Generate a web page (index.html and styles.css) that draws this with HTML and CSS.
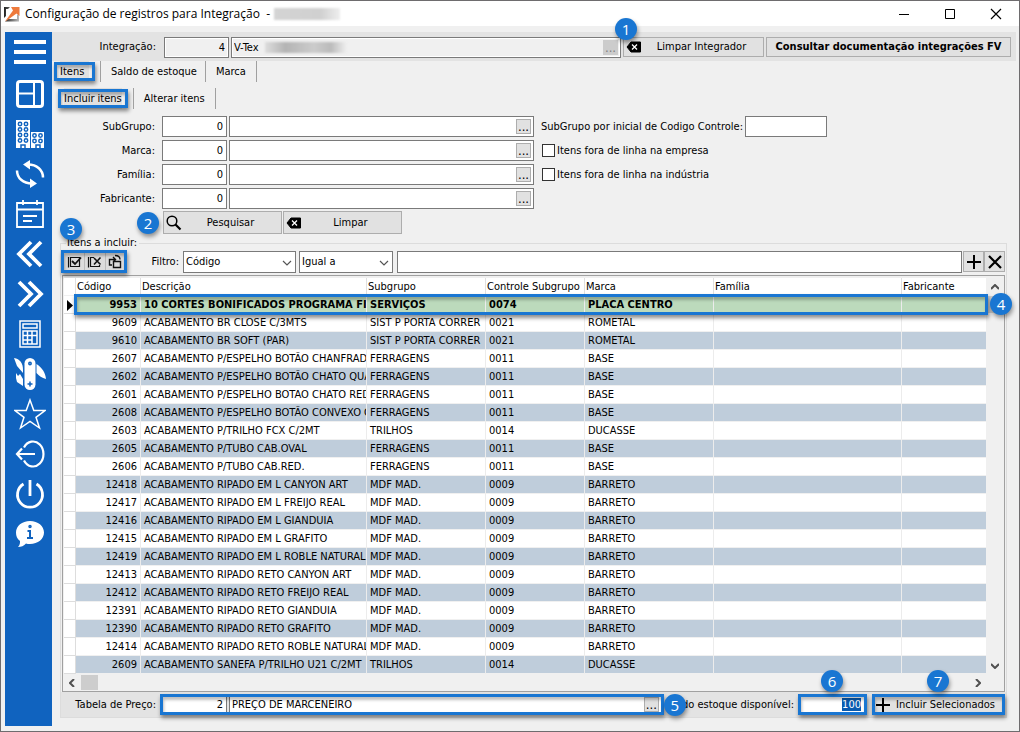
FILE: index.html
```html
<!DOCTYPE html>
<html lang="pt-BR">
<head>
<meta charset="utf-8">
<title>Configuração de registros para Integração</title>
<link rel="stylesheet" href="styles.css">
</head>
<body>
<div class="window">
  <header class="titlebar">
    <svg class="app-icon" width="16" height="16" viewBox="0 0 16 16"><defs><linearGradient id="g" x1="0" x2="1"><stop offset="0" stop-color="#222"/><stop offset="1" stop-color="#bbb"/></linearGradient></defs><path d="M0 1h6L4 3H2v7l-2 2zM1 15.500L4 13h9V9l2-2v8.500z" fill="url(#g)"/><path d="M7 1h8.500v9l-3-2.500-9 6.500-2.500 1.500L9 4.500z" fill="#ee7a3c"/></svg>
    <h1 class="title">Configuração de registros para Integração &nbsp;-</h1>
    <span class="smudge"></span>
    <div class="win-buttons">
      <button type="button" aria-label="Minimizar"><svg width="12" height="12"><path d="M1 6.500h10" stroke="#000"/></svg></button>
      <button type="button" aria-label="Maximizar"><svg width="12" height="12"><path d="M1.500 1.500h9v9h-9z" fill="none" stroke="#000"/></svg></button>
      <button type="button" aria-label="Fechar"><svg width="12" height="12"><path d="M1 1l10 10M11 1L1 11" stroke="#000" stroke-width="1.200"/></svg></button>
    </div>
  </header>
  <div class="body">
    <nav class="sidebar">
      <button type="button" aria-label="Menu"><svg viewBox="0 0 32 32"><path d="M0 4h32M0 14h32M0 24h32" stroke-width="4"/></svg></button>
      <button type="button" aria-label="Painel"><svg viewBox="0 0 32 32"><rect x="3.500" y="3.500" width="25" height="25" rx="2.500" stroke-width="3"/><path d="M20 5v22M4 15.500h16" stroke-width="2"/></svg></button>
      <button type="button" aria-label="Empresas"><svg viewBox="0 0 32 32"><path class="solid" d="M2 2h14v28H2zM17 14h13v16H17z"/><g class="cut"><circle cx="6" cy="6" r="1.700"/><circle cx="12" cy="6" r="1.700"/><circle cx="6" cy="11.500" r="1.700"/><circle cx="12" cy="11.500" r="1.700"/><circle cx="6" cy="17" r="1.700"/><circle cx="12" cy="17" r="1.700"/><circle cx="6" cy="22.500" r="1.700"/><circle cx="12" cy="22.500" r="1.700"/><circle cx="20.500" cy="17.500" r="1.700"/><circle cx="26.500" cy="17.500" r="1.700"/><circle cx="20.500" cy="23" r="1.700"/><circle cx="26.500" cy="23" r="1.700"/><path d="M7 30v-3h4v3M22 30v-3h4v3"/></g></svg></button>
      <button type="button" aria-label="Atualizar"><svg viewBox="0 0 32 32"><path d="M29 19.500C29 12 23 6.500 14 6.500M3 12.500C3 20 9 25.500 18 25.500" stroke-width="2.500"/><path class="solid" d="M16 2v9.500L9 6.500zM16 20.500V30l7-4.500z"/></svg></button>
      <button type="button" aria-label="Agenda"><svg viewBox="0 0 32 32"><path d="M3 5h26v24H3zM3 11.500h26M9 2v5M23 2v5M9 18h14M9 23h9" stroke-width="1.800"/></svg></button>
      <button type="button" aria-label="Anterior"><svg viewBox="0 0 32 32"><path d="M17 4L5 16l12 12M27 4L15 16l12 12" stroke-width="3.800"/></svg></button>
      <button type="button" aria-label="Próximo"><svg viewBox="0 0 32 32"><path d="M5 4l12 12L5 28M15 4l12 12-12 12" stroke-width="3.800"/></svg></button>
      <button type="button" aria-label="Calculadora"><svg viewBox="0 0 32 32"><path d="M6 3h20v26H6zM9 6h14v4H9zM9 13h14v13H9zM13.500 13v13M18 13v13M9 17.500h14M9 22h9" stroke-width="1.500"/></svg></button>
      <button type="button" aria-label="Ferramentas"><svg viewBox="0 0 32 32"><rect class="solid" x="10.500" y="0" width="11" height="32" rx="5.500"/><path class="solid" d="M0 0c6 1 9 5 9 12v3L3 8zM22.500 6c6 4 9 9 9.500 15-4-1-7-3-9.500-6zM2 15l2 3 2-2 3 5v7l-6-4-1-4z"/><g class="cut"><circle cx="16" cy="5.500" r="1.200"/><path d="M16 23.500v5M13.500 26h5"/></g></svg></button>
      <button type="button" aria-label="Favoritos"><svg viewBox="0 0 32 32"><path d="M16 2l3.800 10.500H31l-9 6.800L25.500 30 16 23.500 6.500 30 10 19.300 1 12.500h11.200z" stroke-width="1.500"/></svg></button>
      <button type="button" aria-label="Sair"><svg viewBox="0 0 32 32"><path d="M10 9.500A10.500 12.500 0 1 1 10 22.500M3 16h18M8 10.500L3 16l5 5.500" stroke-width="2.200"/></svg></button>
      <button type="button" aria-label="Desligar"><svg viewBox="0 0 32 32"><path d="M9.500 6A12.500 12.500 0 1 0 22.500 6M16 2v16" stroke-width="2.800"/></svg></button>
      <button type="button" aria-label="Informações"><svg viewBox="0 0 32 32"><path class="solid" d="M16 3c8 0 14 5 14 11.500S24 26 16 26c-1.500 0-3 0-4-.5C10 28 7 29 4 29c2-2 2-4 2-6-3-2-4-5-4-8.500C2 8 8 3 16 3z"/><g class="cut"><circle cx="16" cy="8.500" r="1"/><path d="M13.500 13h2.500v7m-3 0h6" stroke-width="2"/></g></svg></button>
    </nav>
    <main class="main">
      <div class="toolbar">
        <label for="integ" class="lbl-top">Integração:</label>
        <input id="integ" class="field num readonly" value="4" readonly>
        <div class="lookup grow"><input class="field readonly" aria-label="Nome da integração" value="V-Tex" readonly><span class="smudge-field"></span><button type="button" class="dots off" aria-label="Buscar integração">...</button></div>
        <button type="button" class="btn btn-int"><svg class="bi" width="16" height="12" viewBox="0 0 16 12"><path d="M5 1h9.500v10H5L1 6z" stroke="#000" stroke-linejoin="round"/><path d="M6 3.500l5 5M11 3.500l-5 5" stroke="#fff" stroke-width="1.300"/></svg><span class="bt">Limpar Integrador</span><span class="badge b1">1</span></button>
        <button type="button" class="btn btn-doc">Consultar documentação integrações FV</button>
      </div>
      <div class="tabs" role="tablist">
        <button type="button" role="tab" aria-selected="true" class="tab active">Itens<i class="frame"></i></button>
        <button type="button" role="tab" class="tab">Saldo de estoque</button>
        <button type="button" role="tab" class="tab">Marca</button>
      </div>
      <div class="tabs sub" role="tablist">
        <button type="button" role="tab" aria-selected="true" class="tab active">Incluir itens<i class="frame"></i></button>
        <button type="button" role="tab" class="tab">Alterar itens</button>
      </div>
      <div class="filters">
        <div class="col">
          <div class="row"><label for="sg">SubGrupo:</label><input id="sg" class="field num" value="0"><div class="lookup"><input class="field" aria-label="Nome do subgrupo"><button type="button" class="dots">...</button></div></div>
          <div class="row"><label for="mc">Marca:</label><input id="mc" class="field num" value="0"><div class="lookup"><input class="field" aria-label="Nome da marca"><button type="button" class="dots">...</button></div></div>
          <div class="row"><label for="fm">Família:</label><input id="fm" class="field num" value="0"><div class="lookup"><input class="field" aria-label="Nome da família"><button type="button" class="dots">...</button></div></div>
          <div class="row"><label for="fb">Fabricante:</label><input id="fb" class="field num" value="0"><div class="lookup"><input class="field" aria-label="Nome do fabricante"><button type="button" class="dots">...</button></div></div>
          <div class="actions">
            <button type="button" class="btn"><svg class="bi" width="16" height="16" viewBox="0 0 16 16"><circle cx="6" cy="6" r="4.800" fill="none" stroke="#000" stroke-width="1.500"/><path d="M9.500 9.500L14.500 14.500" stroke="#000" stroke-width="2.200"/></svg><span class="bt">Pesquisar</span><span class="badge b2">2</span></button>
            <button type="button" class="btn"><svg class="bi" width="16" height="12" viewBox="0 0 16 12"><path d="M5 1h9.500v10H5L1 6z" stroke="#000" stroke-linejoin="round"/><path d="M6 3.500l5 5M11 3.500l-5 5" stroke="#fff" stroke-width="1.300"/></svg><span class="bt">Limpar</span></button>
          </div>
        </div>
        <div class="col">
          <div class="row"><label for="ini" class="plain">SubGrupo por inicial de Codigo Controle:</label><input id="ini" class="field ini"></div>
          <div class="row check"><input type="checkbox" id="c1"><label for="c1" class="plain">Itens fora de linha na empresa</label></div>
          <div class="row check"><input type="checkbox" id="c2"><label for="c2" class="plain">Itens fora de linha na indústria</label></div>
        </div>
      </div>
      <fieldset class="group">
        <legend>Itens a incluir:</legend>
        <div class="filterbar">
          <div class="tools">
            <button type="button" aria-label="Marcar todos"><svg width="15" height="14" viewBox="0 0 15 14"><path d="M1.500 2v10.500M3.500 2.500h9v9h-9z" fill="none" stroke="#111" stroke-width="1.200"/><path d="M5 6l3 3 6-6.500" fill="none" stroke="#111" stroke-width="1.800"/></svg></button>
            <button type="button" aria-label="Desmarcar todos"><svg width="15" height="14" viewBox="0 0 15 14"><path d="M1.500 2v10.500M7 2.500H3.500v9h9V10" fill="none" stroke="#111" stroke-width="1.200"/><path d="M7 3l6.500 6.500M13.500 2.500L7 9.500" stroke="#111" stroke-width="1.600"/></svg></button>
            <button type="button" aria-label="Inverter seleção"><svg width="15" height="15" viewBox="0 0 15 15"><path d="M4 11H1.500V5.500H7M5.500 7.500h7v6h-7zM5 3l2.500 2.500L5 8" fill="none" stroke="#111" stroke-width="1.400"/><path d="M7 1.500c3 0 5 1 5 4" fill="none" stroke="#111" stroke-width="1.400"/></svg></button>
            <i class="frame"></i><span class="badge b3">3</span>
          </div>
          <label for="filtro" class="lbl-filter">Filtro:</label>
          <div class="pick pick-a"><select id="filtro"><option>Código</option></select><svg width="10" height="6"><path d="M1 1l4 4 4-4" fill="none" stroke="#555" stroke-width="1.200"/></svg></div>
          <div class="pick pick-b"><select aria-label="Operador"><option>Igual a</option></select><svg width="10" height="6"><path d="M1 1l4 4 4-4" fill="none" stroke="#555" stroke-width="1.200"/></svg></div>
          <input class="field search" aria-label="Valor do filtro">
          <button type="button" class="sq" aria-label="Adicionar filtro"><svg width="14" height="14"><path d="M7 0v14M0 7h14" stroke="#000" stroke-width="2"/></svg></button>
          <button type="button" class="sq" aria-label="Remover filtro"><svg width="14" height="14"><path d="M1 1l12 12M13 1L1 13" stroke="#000" stroke-width="2.200"/></svg></button>
        </div>
        <div class="grid">
          <div class="grid-top">
            <div class="grid-data">
              <table>
                <colgroup><col class="k0"><col class="k1"><col class="k2"><col class="k3"><col class="k4"><col class="k5"><col class="k6"><col class="k7"></colgroup>
                <thead><tr><th></th><th>Código</th><th>Descrição</th><th>Subgrupo</th><th>Controle Subgrupo</th><th>Marca</th><th>Família</th><th>Fabricante</th></tr></thead>
                <tbody>
                  <tr class="sel"><td><svg width="7" height="11"><path d="M0 0l6 5.500L0 11z"/></svg></td><td>9953</td><td>10 CORTES BONIFICADOS PROGRAMA FI</td><td>SERVIÇOS</td><td>0074</td><td>PLACA CENTRO</td><td></td><td></td></tr>
                  <tr><td></td><td>9609</td><td>ACABAMENTO BR CLOSE C/3MTS</td><td>SIST P PORTA CORRER</td><td>0021</td><td>ROMETAL</td><td></td><td></td></tr>
                  <tr><td></td><td>9610</td><td>ACABAMENTO BR SOFT (PAR)</td><td>SIST P PORTA CORRER</td><td>0021</td><td>ROMETAL</td><td></td><td></td></tr>
                  <tr><td></td><td>2607</td><td>ACABAMENTO P/ESPELHO BOTÃO CHANFRAD</td><td>FERRAGENS</td><td>0011</td><td>BASE</td><td></td><td></td></tr>
                  <tr><td></td><td>2602</td><td>ACABAMENTO P/ESPELHO BOTÃO CHATO QUA</td><td>FERRAGENS</td><td>0011</td><td>BASE</td><td></td><td></td></tr>
                  <tr><td></td><td>2601</td><td>ACABAMENTO P/ESPELHO BOTAO CHATO RED</td><td>FERRAGENS</td><td>0011</td><td>BASE</td><td></td><td></td></tr>
                  <tr><td></td><td>2608</td><td>ACABAMENTO P/ESPELHO BOTÃO CONVEXO C</td><td>FERRAGENS</td><td>0011</td><td>BASE</td><td></td><td></td></tr>
                  <tr><td></td><td>2603</td><td>ACABAMENTO P/TRILHO FCX C/2MT</td><td>TRILHOS</td><td>0014</td><td>DUCASSE</td><td></td><td></td></tr>
                  <tr><td></td><td>2605</td><td>ACABAMENTO P/TUBO CAB.OVAL</td><td>FERRAGENS</td><td>0011</td><td>BASE</td><td></td><td></td></tr>
                  <tr><td></td><td>2606</td><td>ACABAMENTO P/TUBO CAB.RED.</td><td>FERRAGENS</td><td>0011</td><td>BASE</td><td></td><td></td></tr>
                  <tr><td></td><td>12418</td><td>ACABAMENTO RIPADO EM L CANYON ART</td><td>MDF MAD.</td><td>0009</td><td>BARRETO</td><td></td><td></td></tr>
                  <tr><td></td><td>12417</td><td>ACABAMENTO RIPADO EM L FREIJO REAL</td><td>MDF MAD.</td><td>0009</td><td>BARRETO</td><td></td><td></td></tr>
                  <tr><td></td><td>12416</td><td>ACABAMENTO RIPADO EM L GIANDUIA</td><td>MDF MAD.</td><td>0009</td><td>BARRETO</td><td></td><td></td></tr>
                  <tr><td></td><td>12415</td><td>ACABAMENTO RIPADO EM L GRAFITO</td><td>MDF MAD.</td><td>0009</td><td>BARRETO</td><td></td><td></td></tr>
                  <tr><td></td><td>12419</td><td>ACABAMENTO RIPADO EM L ROBLE NATURAL</td><td>MDF MAD.</td><td>0009</td><td>BARRETO</td><td></td><td></td></tr>
                  <tr><td></td><td>12413</td><td>ACABAMENTO RIPADO RETO CANYON ART</td><td>MDF MAD.</td><td>0009</td><td>BARRETO</td><td></td><td></td></tr>
                  <tr><td></td><td>12412</td><td>ACABAMENTO RIPADO RETO FREIJO REAL</td><td>MDF MAD.</td><td>0009</td><td>BARRETO</td><td></td><td></td></tr>
                  <tr><td></td><td>12391</td><td>ACABAMENTO RIPADO RETO GIANDUIA</td><td>MDF MAD.</td><td>0009</td><td>BARRETO</td><td></td><td></td></tr>
                  <tr><td></td><td>12390</td><td>ACABAMENTO RIPADO RETO GRAFITO</td><td>MDF MAD.</td><td>0009</td><td>BARRETO</td><td></td><td></td></tr>
                  <tr><td></td><td>12414</td><td>ACABAMENTO RIPADO RETO ROBLE NATURAL</td><td>MDF MAD.</td><td>0009</td><td>BARRETO</td><td></td><td></td></tr>
                  <tr><td></td><td>2609</td><td>ACABAMENTO SANEFA P/TRILHO U21 C/2MT</td><td>TRILHOS</td><td>0014</td><td>DUCASSE</td><td></td><td></td></tr>
                </tbody>
              </table>
            </div>
            <div class="vbar"><svg width="8" height="6"><path d="M0 5l4-4 4 4" class="arr"/></svg><span class="vthumb"></span><svg width="8" height="6"><path d="M0 1l4 4 4-4" class="arr"/></svg></div>
            <i class="frame row-frame"></i><span class="badge b4">4</span>
          </div>
          <div class="hbar"><svg width="6" height="8"><path d="M5 0L1 4l4 4" class="arr"/></svg><span class="hthumb"></span><svg width="6" height="8"><path d="M1 0l4 4-4 4" class="arr"/></svg></div>
        </div>
        <div class="footer">
          <label for="tp" class="lbl-price">Tabela de Preço:</label>
          <div class="hl price"><input id="tp" class="field num" value="2"><div class="lookup grow"><input class="field" aria-label="Nome da tabela de preço" value="PREÇO DE MARCENEIRO"><button type="button" class="dots">...</button></div><i class="frame"></i><span class="badge b5">5</span></div>
          <label for="saldo" class="lbl-stock">Saldo estoque disponível:</label>
          <div class="hl stock"><input id="saldo" class="field num" value="100"><i class="frame"></i><span class="badge b6">6</span></div>
          <button type="button" class="hl btn include"><svg class="bi" width="14" height="14"><path d="M7 0v14M0 7h14" stroke="#000" stroke-width="2"/></svg><span class="bt">Incluir Selecionados</span><i class="frame"></i><span class="badge b7">7</span></button>
        </div>
      </fieldset>
    </main>
  </div>
</div>
<script src="app.js"></script>
</body>
</html>
```

FILE: styles.css
```css
* { box-sizing: border-box; }
body { margin: 0; background: #f0f0f0; color: #000; font: 11px/14px "DejaVu Sans Condensed", "Noto Sans", sans-serif; }
button, input, select { font: inherit; color: inherit; margin: 0; border-radius: 0; }
button { padding: 0; border: 0; background: none; white-space: nowrap; }
label { white-space: nowrap; }

.window { display: flex; flex-direction: column; min-height: 100vh; border: 1px solid #6e6c6e; }
.titlebar { display: flex; align-items: center; height: 25px; padding-left: 3px; background: #fff; }
.title { margin: 0 4px 0 5px; font: 12px/16px "Open Sans", "Noto Sans", sans-serif; white-space: nowrap; }
.smudge { width: 66px; height: 12px; background: linear-gradient(90deg, #d4d4d4, #d0d0d0 70%, #eee); filter: blur(1px); }
.win-buttons { display: flex; margin-left: auto; }
.win-buttons button { display: grid; place-items: center; width: 46px; height: 24px; }

.body { display: flex; flex: 1; padding: 6px 3px 5px 4px; }
.sidebar { flex: none; display: flex; flex-direction: column; width: 47px; padding-top: 2px; background: #1063bf; }
.sidebar button { display: grid; place-items: center; width: 100%; height: 40px; padding-left: 3px; }
.sidebar svg { width: 32px; height: 32px; fill: none; stroke: #fff; }
.sidebar .solid { fill: #fff; stroke: none; }
.sidebar .cut { stroke: #1063bf; stroke-width: 1.5; }
.main { flex: 1; min-width: 0; }

.toolbar { display: flex; align-items: center; gap: 2px; height: 29px; padding: 1px 5px 0 0; background: #e3e3e3; }
.lbl-top { width: 110px; padding-right: 6px; text-align: right; }
.field { width: 100%; min-width: 0; height: 21px; padding: 0 2px; border: 1px solid #7a7a7a; background: #fff; outline: 0; }
.field.num { flex: none; width: 65px; padding-right: 3px; text-align: right; }
.field.readonly { background: #f0f0f0; border-color: #7a7a7a; box-shadow: inset 0 0 0 1px #fff; }
.lookup { position: relative; width: 305px; }
.grow { flex: 1; width: auto; }
.lookup .field { display: block; }
.dots { position: absolute; right: 3px; top: 3px; width: 15px; height: 15px; border: 1px solid #adadad; background: #e1e1e1; font-size: 13px; line-height: 13px; }
.dots.off { border-color: #ccc; background: #ccc; color: #808080; }
.smudge-field { position: absolute; left: 34px; top: 5px; width: 82px; height: 11px; background: linear-gradient(90deg, #ddd, #b4b4b4 25%, #ccc 60%, #bbb 80%, #f0f0f0); filter: blur(1px); }
.btn { position: relative; display: flex; align-items: center; height: 23px; padding: 0 2px; border: 1px solid #adadad; background: #e1e1e1; }
.bt { flex: 1; text-align: center; }
.bi { flex: none; }
.toolbar .btn { height: 20px; }
.btn-int { width: 141px; }
.toolbar .btn-doc { justify-content: center; width: 245px; font-weight: bold; }

.tabs { display: flex; height: 21px; margin-bottom: 6px; padding-left: 2px; }
.tabs.sub { padding-left: 6px; }
.tab { position: relative; padding: 0 8px 0 10px; border-left: 1px solid #a0a0a0; }
.tab:last-child { padding-right: 10px; border-right: 1px solid #a0a0a0; }
.tab.active { min-width: 41px; margin-right: 5px; padding: 0 6px; border: 0; background: #e1e1e1; background-clip: content-box; text-align: left; }

.filters { display: flex; gap: 7px; padding-top: 1px; }
.col { display: flex; flex-direction: column; gap: 3px; }
.row { display: flex; align-items: center; gap: 2px; height: 21px; }
.row label { width: 108px; padding-right: 5px; text-align: right; }
.row .plain { width: auto; padding: 0; }
.row .ini { width: 82px; }
.check input { appearance: none; width: 13px; height: 13px; margin-left: 1px; border: 1px solid #333; background: #fff; }
.check input:checked { background: #1976d2; }
.actions { display: flex; gap: 1px; margin: -1px 0 0 111px; }
.actions .btn { width: 119px; }

.group { min-width: 0; margin: 2px 9px 0 8px; padding: 0; border: 1px solid #dcdcdc; }
.group legend { margin-left: 5px; padding: 0 2px 0 1px; line-height: 14px; }
.filterbar { display: flex; align-items: center; height: 23px; margin-bottom: 2px; }
.tools { position: relative; display: flex; width: 66px; height: 23px; padding: 0 1px 0 4px; background: #dcdcdc; }
.tools button { flex: 1; display: grid; place-items: center; border-right: 1px solid #bbb; }
.lbl-filter { width: 56px; padding-right: 4px; text-align: right; }
.pick { position: relative; height: 22px; }
.pick-a { width: 113px; margin-right: 3px; }
.pick-b { width: 94px; margin-right: 4px; }
.pick select { appearance: none; width: 100%; height: 22px; padding: 0 2px; border: 1px solid #7a7a7a; background: #fff; }
.pick svg { position: absolute; right: 4px; top: 9px; pointer-events: none; }
.search { flex: 1; height: 22px; margin-right: 1px; }
.sq { display: grid; place-items: center; width: 21px; height: 21px; border: 1px solid #adadad; background: #e1e1e1; }
.sq:last-child { margin-right: 1px; }

.grid { margin: 0 1px; padding: 2px 1px 0; border: 1px solid #a0a0a0; background: #f0f0f0; }
.grid-top { position: relative; display: flex; }
.grid-data { flex: 1; min-width: 0; }
table { width: 100%; border-collapse: separate; border-spacing: 0; table-layout: fixed; background: #fff; }
.k0 { width: 12px; } .k1 { width: 65px; } .k2 { width: 226px; } .k3 { width: 119px; }
.k4 { width: 99px; } .k5 { width: 129px; } .k6 { width: 188px; } .k7 { width: 85px; }
th, td { height: 18px; padding: 1px 0 0 3px; overflow: hidden; border-right: 1px solid #ececec; border-bottom: 1px solid #f0f0f0; font-weight: normal; line-height: 16px; text-align: left; white-space: nowrap; }
th { padding-left: 1px; border-right-color: #e0e0e0; }
tbody tr:nth-child(odd) td { background: #bfcddb; }
tbody tr td:first-child, tbody tr:nth-child(odd) td:first-child { background: #fff; border-right-color: #ddd; border-bottom-color: #ddd; }
td:nth-child(2) { padding-right: 3px; text-align: right; }
tbody .sel td:nth-child(n+2) { background: #bcdabc; font-weight: bold; }
td svg { display: block; }
.vbar { display: flex; flex-direction: column; align-items: center; width: 17px; padding: 6px 0 5px; background: #f0f0f0; }
.vthumb { width: 17px; height: 17px; margin: 6px 0 auto; background: #cdcdcd; }
.hbar { display: flex; align-items: center; height: 17px; padding: 0 22px 0 5px; }
.hthumb { width: 17px; height: 15px; margin: 0 auto 0 6px; background: #cdcdcd; }
.arr { fill: none; stroke: #505050; stroke-width: 2; }

.footer { display: flex; align-items: center; height: 25px; padding-right: 1px; background: #e3e3e3; }
.lbl-price { width: 99px; padding-right: 4px; text-align: right; }
.hl { position: relative; display: flex; height: 21px; }
.price { flex: 1; gap: 2px; padding: 0 2px; }
.lbl-stock { padding: 0 4px 0 3px; }
.stock { width: 69px; margin-right: 5px; padding: 0 2px; }
.stock ::selection { background: #0a5cb0; color: #fff; }
.include { width: 133px; height: 21px; padding: 0 6px 0 3px; }
.include .bt { text-align: right; padding-right: 3px; }

.frame { position: absolute; inset: 0; border: 3px solid #1976d2; box-shadow: 1px 3px 4px rgba(0,0,0,.45), inset 1px 3px 3px rgba(0,0,0,.25); pointer-events: none; }
.tab .frame { inset: 1px 0; }
.include .frame { inset: -1px; }
.row-frame { inset: 16px 15px auto 10px; height: 21px; }
.badge { position: absolute; z-index: 2; width: 22px; height: 22px; border-radius: 50%; background: #1976d2; box-shadow: 1px 3px 4px rgba(0,0,0,.4); color: #fff; font: 15px/22px "Open Sans", "Noto Sans", sans-serif; text-align: center; }
.b1 { left: -9px; top: -20px; }
.b2 { left: -27px; top: 0; }
.b3 { left: -1px; top: -32px; }
.b4 { right: -9px; top: 15px; }
.b5 { right: -22px; top: 0; }
.b6 { left: 23px; top: -24px; }
.b7 { left: 54px; top: -25px; }
```

FILE: app.js
```js
var stock = document.getElementById("saldo");
stock.focus();
stock.select();
```
